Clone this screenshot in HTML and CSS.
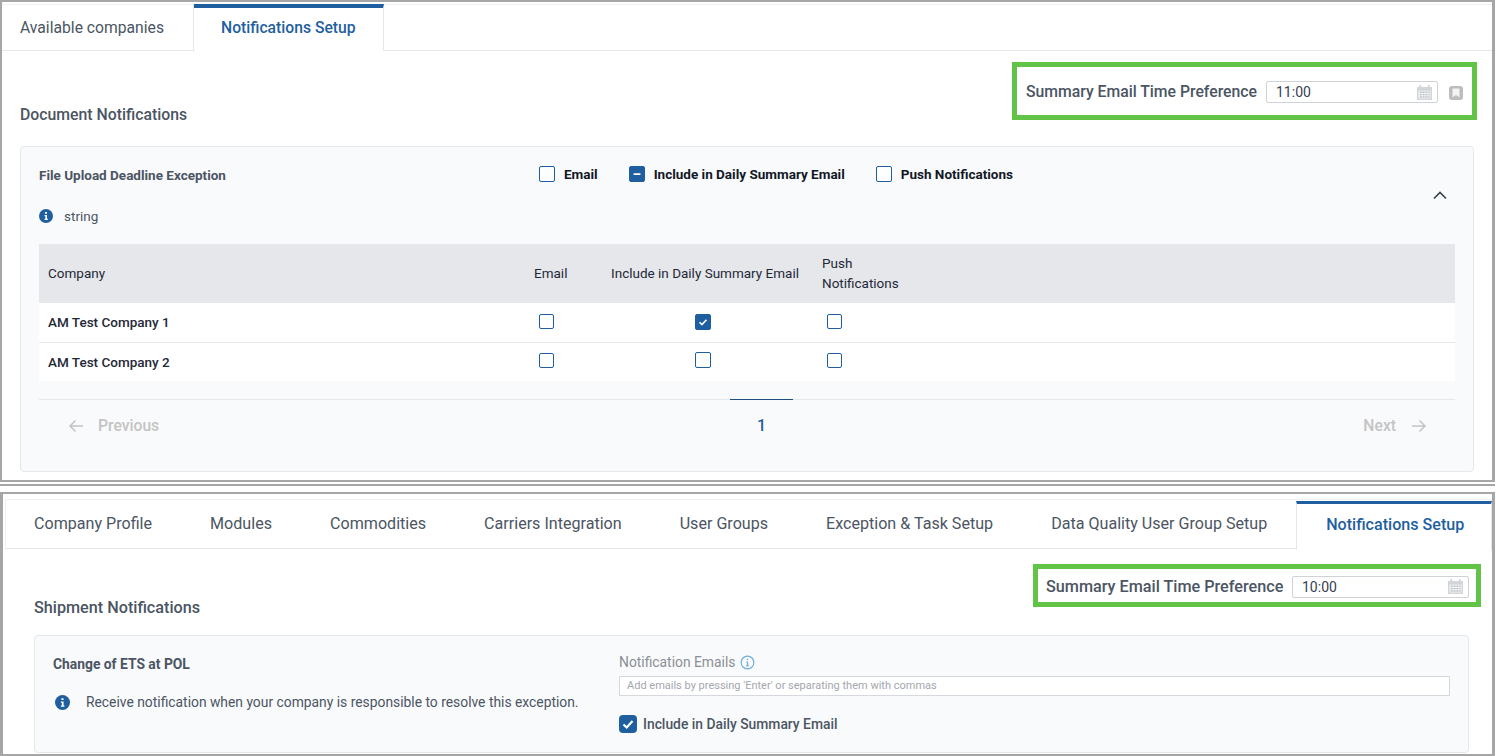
FILE: index.html
```html
<!DOCTYPE html>
<html lang="en">
<head>
  <meta charset="UTF-8">
  <title>Notifications Setup</title>
  <link rel="stylesheet" href="styles.css">
</head>
<body>
  <section class="panel panel-top">
    <div class="tabs">
      <div class="tab tab-first">Available companies</div>
      <div class="tab active">Notifications Setup</div>
    </div>
    <div class="content">
      <div class="head-row">
        <h2 class="heading">Document Notifications</h2>
        <div class="summary-box">
          <span class="summary-label">Summary Email Time Preference</span>
          <div class="time-input">
            <span>11:00</span>
            <svg class="cal-icon" viewBox="0 0 16 16"><path fill="#d2d5d9" d="M0 2h2.500V0h2v2h7V0h2v2H16v14H0z"/><path fill="#f1f2f4" d="M1.500 6h13v8.500h-13z"/><path fill="#bcc0c5" d="M3 7h2v1.500H3zM6 7h2v1.500H6zM9 7h2v1.500H9zM12 7h1.500v1.500H12zM3 9.500h2V11H3zM6 9.500h2V11H6zM9 9.500h2V11H9zM12 9.500h1.500V11H12zM3 12h2v1.500H3zM6 12h2v1.500H6zM9 12h2v1.500H9zM12 12h1.500v1.500H12z"/></svg>
          </div>
          <svg class="save-icon" viewBox="0 0 14 14"><rect width="14" height="14" rx="3" fill="#bdbdbd"/><path fill="#f4f4f4" d="M3.500 2.500h7v9L7 9l-3.500 2.500z"/></svg>
        </div>
      </div>

      <div class="card card-doc">
        <div class="card-head">
          <div class="card-title">File Upload Deadline Exception</div>
          <div class="options">
            <label class="option"><span class="box box-lg"></span>Email</label>
            <label class="option"><span class="box box-lg on"><svg viewBox="0 0 16 16"><rect x="4" y="7" width="8" height="2" rx="0.5" fill="#fff"/></svg></span>Include in Daily Summary Email</label>
            <label class="option"><span class="box box-lg"></span>Push Notifications</label>
          </div>
          <svg class="chevron" viewBox="0 0 16 16"><path d="M2 11.500 8 5.500l6 6" fill="none" stroke="#374151" stroke-width="1.600"/></svg>
          <div class="info-row">
            <svg class="info-icon" viewBox="0 0 14 14"><circle cx="7" cy="7" r="7" fill="#1f5f9f"/><path fill="#fff" d="M6 3h2v1.700H6zM5.500 6H8v3.800h.8V11H5.500V9.800h.9V7.200h-.9z"/></svg>
            <span>string</span>
          </div>
        </div>

        <div class="company-table">
          <div class="t-row t-head">
            <div class="cell">Company</div>
            <div class="cell">Email</div>
            <div class="cell">Include in Daily Summary Email</div>
            <div class="cell">Push Notifications</div>
          </div>
          <div class="t-row t-line">
            <div class="cell company">AM Test Company 1</div>
            <div class="cell"><span class="box box-email"></span></div>
            <div class="cell"><span class="box box-include on"><svg viewBox="0 0 16 16"><path d="M4 8.300 6.800 11 12 5.500" fill="none" stroke="#fff" stroke-width="1.800"/></svg></span></div>
            <div class="cell"><span class="box box-email"></span></div>
          </div>
          <div class="t-row t-last">
            <div class="cell company">AM Test Company 2</div>
            <div class="cell"><span class="box box-email"></span></div>
            <div class="cell"><span class="box box-include"></span></div>
            <div class="cell"><span class="box box-email"></span></div>
          </div>
        </div>

        <div class="pager">
          <div class="pager-btn pager-prev">
            <svg class="arrow" viewBox="0 0 16 16"><path d="M15 8H2M7.500 2.500 2 8l5.500 5.500" fill="none" stroke="#c4c4c4" stroke-width="1.500"/></svg>
            <span>Previous</span>
          </div>
          <div class="page-num">1</div>
          <div class="pager-btn pager-next">
            <span>Next</span>
            <svg class="arrow" viewBox="0 0 16 16"><path d="M1 8h13M8.500 2.500 14 8l-5.500 5.500" fill="none" stroke="#c4c4c4" stroke-width="1.500"/></svg>
          </div>
        </div>
      </div>
    </div>
  </section>

  <section class="panel panel-bottom">
    <div class="tabs tabs-wide">
      <div class="tab">Company Profile</div>
      <div class="tab">Modules</div>
      <div class="tab">Commodities</div>
      <div class="tab">Carriers Integration</div>
      <div class="tab">User Groups</div>
      <div class="tab">Exception &amp; Task Setup</div>
      <div class="tab">Data Quality User Group Setup</div>
      <div class="tab active">Notifications Setup</div>
    </div>
    <div class="content content-wide">
      <div class="head-row head-row-wide">
        <h2 class="heading">Shipment Notifications</h2>
        <div class="summary-box summary-wide">
          <span class="summary-label">Summary Email Time Preference</span>
          <div class="time-input">
            <span>10:00</span>
            <svg class="cal-icon" viewBox="0 0 16 16"><path fill="#d2d5d9" d="M0 2h2.500V0h2v2h7V0h2v2H16v14H0z"/><path fill="#f1f2f4" d="M1.500 6h13v8.500h-13z"/><path fill="#bcc0c5" d="M3 7h2v1.500H3zM6 7h2v1.500H6zM9 7h2v1.500H9zM12 7h1.500v1.500H12zM3 9.500h2V11H3zM6 9.500h2V11H6zM9 9.500h2V11H9zM12 9.500h1.500V11H12zM3 12h2v1.500H3zM6 12h2v1.500H6zM9 12h2v1.500H9zM12 12h1.500v1.500H12z"/></svg>
          </div>
        </div>
      </div>

      <div class="card card-short">
        <div class="short-left">
          <div class="card-title">Change of ETS at POL</div>
          <div class="info-row info-row-wide">
            <svg class="info-icon" viewBox="0 0 14 14"><circle cx="7" cy="7" r="7" fill="#1f5f9f"/><path fill="#fff" d="M6 3h2v1.700H6zM5.500 6H8v3.800h.8V11H5.500V9.800h.9V7.200h-.9z"/></svg>
            <span>Receive notification when your company is responsible to resolve this exception.</span>
          </div>
        </div>
        <div class="short-right">
          <div class="emails-label">
            <span>Notification Emails</span>
            <svg class="info-outline" viewBox="0 0 16 16"><circle cx="8" cy="8" r="6.800" fill="none" stroke="#6aaede" stroke-width="1.200"/><path fill="#6aaede" d="M7.300 4h1.400v1.400H7.300zM6.500 6.800h2.200v4.200h.9v1H6.400v-1h1V7.800h-.9z"/></svg>
          </div>
          <div class="emails-input">Add emails by pressing 'Enter' or separating them with commas</div>
          <label class="daily-check">
            <span class="box-round"><svg viewBox="0 0 18 18"><path d="M4.500 9.500 7.700 12.500 13.500 6" fill="none" stroke="#fff" stroke-width="2.200"/></svg></span>
            Include in Daily Summary Email
          </label>
        </div>
      </div>
    </div>
  </section>
</body>
</html>
```

FILE: styles.css
```css
* {
  box-sizing: border-box;
}
body {
  margin: 0;
  height: 756px;
  overflow: hidden;
  background: #fff;
  font-family: Roboto, "Liberation Sans", sans-serif;
  font-size: 14px;
  color: #4b5563;
}
.panel {
  width: 1495px;
  overflow: hidden;
  background: #fff;
  border: 2px solid #a6a6a6;
  border-right-width: 3px;
}
.panel-top {
  height: 482px;
  font-size: 13.5px;
  box-shadow: 0 2px 0 #fff, 0 4px 0 #a6a6a6;
}
.panel-bottom {
  height: 264px;
  margin-top: 10px;
  border-left-width: 3px;
  font-size: 13.85px;
}

/* tabs */
.tabs {
  display: flex;
  height: 47px;
  margin-top: 2px;
  border-top: 1px solid #eef0f3;
  border-bottom: 1px solid #e5e7eb;
}
.tab {
  padding: 0 29px;
  font-size: 15.7px;
  line-height: 45px;
  white-space: nowrap;
}
.tab-first {
  width: 192px;
  padding: 0 18px;
  border-right: 1px solid #e5e7eb;
}
.tab.active {
  height: 47px;
  margin-top: -1px;
  padding: 0 27px;
  border-top: 4px solid #1f5f9f;
  border-right: 1px solid #e5e7eb;
  background: #fff;
  color: #1f5f9f;
  font-weight: 500;
  line-height: 40px;
}
.tabs-wide {
  height: 50px;
  margin: 5px 0 0 2px;
  border-left: 1px solid #eef0f3;
  border-right: 1px solid #eef0f3;
}
.tabs-wide .tab {
  font-size: 16.1px;
  line-height: 48px;
}
.tabs-wide .tab:first-child {
  margin-left: -1px;
}
.tabs-wide .tab.active {
  height: 49px;
  margin-top: 1px;
  padding: 0 27px 0 29px;
  border-top-width: 3px;
  border-left: 1px solid #e5e7eb;
  line-height: 42px;
}

/* heading row */
.content {
  padding: 11px 15px 0 18px;
}
.content-wide {
  padding: 15px 11px 0 31px;
}
.head-row {
  display: flex;
  justify-content: space-between;
  align-items: flex-end;
}
.heading {
  margin: 0 0 -1px;
  font-size: 15.8px;
  font-weight: 500;
  line-height: 20px;
}
.summary-box {
  display: flex;
  align-items: center;
  width: 465px;
  height: 58px;
  margin-bottom: 4px;
  padding: 0 9px;
  border: 5px solid #62c446;
}
.summary-label {
  width: 240px;
  font-size: 15.75px;
  font-weight: 500;
  white-space: nowrap;
}
.time-input {
  display: flex;
  justify-content: space-between;
  align-items: center;
  flex: none;
  width: 172px;
  height: 22px;
  margin-top: 2px;
  padding: 0 5px 0 9px;
  border: 1px solid #cfd2d6;
  border-radius: 2px;
  background: #fff;
  color: #374151;
  font-size: 14px;
}
.cal-icon {
  width: 15px;
  height: 15px;
}
.save-icon {
  width: 14px;
  height: 14px;
  margin: 4px 0 0 11px;
}
.head-row-wide .heading {
  margin-bottom: 0;
  font-size: 16.2px;
}
.summary-wide {
  width: 448px;
  height: 43px;
  margin-bottom: 11px;
  padding: 2px 7px 0 8px;
}
.summary-wide .summary-label {
  width: 246px;
  font-size: 16.2px;
}
.summary-wide .time-input {
  width: 177px;
  margin-top: 0;
  margin-left: 1px;
  padding-right: 5px;
}

/* card */
.card {
  margin-top: 22px;
  padding: 18px 18px 21px;
  border: 1px solid #e5e7eb;
  border-radius: 4px;
  background: #f9fafb;
}
.card-doc {
  margin-right: 3px;
}
.card-head {
  display: grid;
  grid-template-columns: 500px 1fr 23px;
  grid-template-rows: 20px 20px;
  row-gap: 21px;
}
.card-title {
  font-weight: 700;
  line-height: 20px;
  white-space: nowrap;
}
.options {
  display: flex;
  gap: 31px;
  height: 18px;
}
.option {
  display: flex;
  align-items: center;
  gap: 9px;
  color: #111827;
  font-weight: 700;
  white-space: nowrap;
}
.chevron {
  grid-column: 3;
  grid-row: 1 / span 2;
  align-self: center;
  width: 16px;
  height: 16px;
  margin-bottom: 2px;
}
.info-row {
  display: flex;
  align-items: center;
  gap: 11px;
  grid-column: 1;
  grid-row: 2;
}
.info-icon {
  width: 14px;
  height: 14px;
  flex: none;
}

/* checkboxes */
.box {
  display: block;
  width: 15px;
  height: 15px;
  border: 1px solid #1f5f9f;
  border-radius: 2px;
  background: #fff;
}
.box svg {
  display: block;
  width: 100%;
  height: 100%;
}
.box.on {
  background: #1f5f9f;
}
.box-lg {
  width: 16px;
  height: 16px;
}
.box-email {
  margin-left: 5px;
}
.box-include {
  width: 16px;
  height: 16px;
  margin-left: 84px;
}

/* table */
.company-table {
  margin-top: 18px;
  background: #fff;
}
.t-row {
  display: grid;
  grid-template-columns: 486px 77px 211px 100px 1fr;
  align-items: center;
  height: 38px;
}
.t-line {
  height: 40px;
  padding-bottom: 2px;
  border-bottom: 1px solid #e5e7eb;
}
.t-last .box {
  margin-bottom: 4px;
}
.t-head {
  height: 59px;
  padding-bottom: 1px;
  background: #e5e7eb;
  color: #1f2937;
  line-height: 20px;
}
.cell {
  padding-left: 9px;
}
.company {
  color: #1f2937;
  font-weight: 500;
}

/* pager */
.pager {
  display: grid;
  grid-template-columns: 691px 63px 1fr;
  height: 51px;
  margin-top: 18px;
  border-top: 1px solid #e5e7eb;
}
.pager-btn {
  display: flex;
  align-items: center;
  padding-bottom: 1px;
  color: #c4c4c4;
  font-size: 15.7px;
  font-weight: 500;
}
.pager-prev {
  gap: 14px;
  padding-left: 29px;
}
.pager-next {
  justify-content: flex-end;
  gap: 15px;
  padding-right: 28px;
}
.arrow {
  width: 16px;
  height: 16px;
}
.page-num {
  margin-top: -1px;
  border-top: 1px solid #1f4f7f;
  color: #1f5f9f;
  font-size: 16px;
  font-weight: 500;
  line-height: 52px;
  text-align: center;
}

/* second card */
.card-short {
  display: grid;
  grid-template-columns: 566px 1fr;
  height: 118px;
  margin-top: 17px;
  margin-right: 12px;
}
.info-row-wide {
  gap: 16px;
  margin: 20px 0 0 2px;
}
.info-row-wide .info-icon {
  width: 15px;
  height: 15px;
}
.short-right {
  margin-top: -1px;
}
.emails-label {
  display: flex;
  align-items: center;
  gap: 5px;
  color: #8a8f96;
  line-height: 18px;
}
.info-outline {
  width: 15px;
  height: 15px;
}
.emails-input {
  width: 831px;
  height: 20px;
  margin-top: 5px;
  padding-left: 7px;
  border: 1px solid #d5d8dc;
  background: #fff;
  color: #a3a7ad;
  font-size: 11px;
  line-height: 18px;
}
.daily-check {
  display: flex;
  align-items: center;
  gap: 6px;
  margin-top: 19px;
  font-weight: 500;
}
.box-round {
  display: block;
  width: 18px;
  height: 18px;
  border-radius: 4px;
  background: #1f5f9f;
}
.box-round svg {
  display: block;
}
```
